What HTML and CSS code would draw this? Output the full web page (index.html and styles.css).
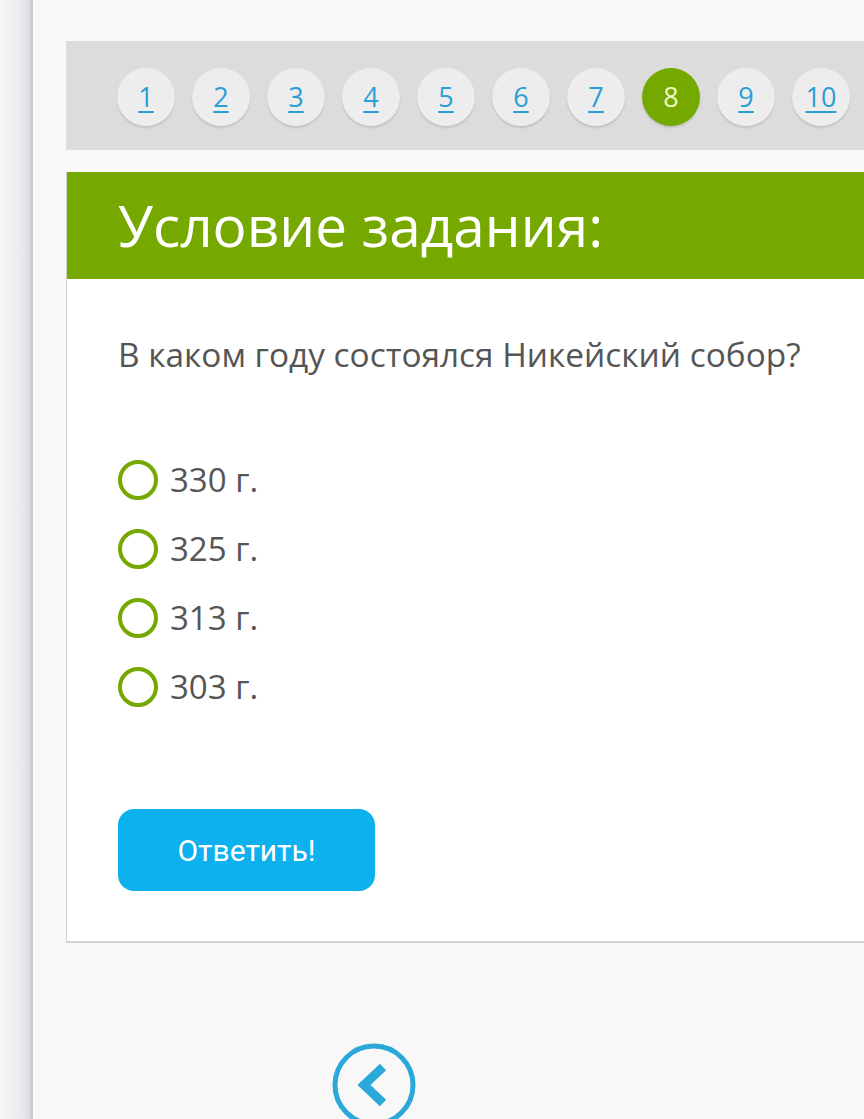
FILE: index.html
```html
<!DOCTYPE html>
<html lang="ru">
<head>
<meta charset="utf-8">
<title>Условие задания</title>
<link rel="stylesheet" href="styles.css">
</head>
<body>
<div class="page">
  <div class="rail"></div>
  <div class="main">
    <nav class="pager">
      <a class="num" href="#">1</a>
      <a class="num" href="#">2</a>
      <a class="num" href="#">3</a>
      <a class="num" href="#">4</a>
      <a class="num" href="#">5</a>
      <a class="num" href="#">6</a>
      <a class="num" href="#">7</a>
      <span class="num active">8</span>
      <a class="num" href="#">9</a>
      <a class="num" href="#">10</a>
    </nav>
    <section class="card">
      <header class="card-head">Условие задания:</header>
      <div class="card-body">
        <p class="question">В каком году состоялся Никейский собор?</p>
        <ul class="options">
          <li class="option"><span class="radio"></span>330 г.</li>
          <li class="option"><span class="radio"></span>325 г.</li>
          <li class="option"><span class="radio"></span>313 г.</li>
          <li class="option"><span class="radio"></span>303 г.</li>
        </ul>
        <button class="submit" type="button">Ответить!</button>
      </div>
    </section>
    <div class="bottom-nav">
      <a class="back" href="#" aria-label="Назад">
        <svg width="84" height="84" viewBox="0 0 84 84">
          <circle cx="42" cy="42" r="39" fill="none" stroke="#2ba8da" stroke-width="5"/>
          <polyline points="51,24 32,42 51,60" fill="none" stroke="#2ba8da" stroke-width="9" stroke-linejoin="miter"/>
        </svg>
      </a>
    </div>
  </div>
</div>
</body>
</html>
```
FILE: styles.css
```css
html, body {
  margin: 0;
  padding: 0;
  background: #f8f8f8;
  overflow: hidden;
}
body {
  font-family: "Open Sans", "Noto Sans", sans-serif;
  width: 864px;
  height: 1119px;
}
.page {
  display: flex;
  height: 1119px;
  overflow: hidden;
}
.rail {
  flex: 0 0 30px;
  background: linear-gradient(to right, #f6f6f8 0%, #ececf0 60%, #dddde2 100%);
  border-right: 3px solid #cdcdd2;
}
.main {
  flex: 1 1 auto;
  padding-left: 33px;
  padding-top: 41px;
  min-width: 0;
  overflow: hidden;
}
.pager {
  height: 109px;
  box-sizing: border-box;
  background: #dcdcdc;
  display: flex;
  align-items: center;
  gap: 17px;
  padding: 2px 0 0 51px;
  overflow: hidden;
}
.num {
  flex: 0 0 58px;
  width: 58px;
  height: 58px;
  border-radius: 50%;
  background: #ededed;
  box-shadow: 0 2px 2px rgba(0, 0, 0, 0.12);
  display: flex;
  align-items: center;
  justify-content: center;
  color: #2a9fd6;
  font-size: 27px;
  text-decoration: underline;
  text-underline-offset: 4px;
  text-decoration-thickness: 2px;
}
.num.active {
  background: #76a900;
  color: #eef9c8;
  text-decoration: none;
  font-size: 27px;
}
.card {
  margin-top: 22px;
  background: #ffffff;
  border-left: 1px solid #d4d4d4;
  border-bottom: 2px solid #d4d4d4;
}
.card-head {
  background: #76a900;
  color: #ffffff;
  height: 107px;
  box-sizing: border-box;
  padding-left: 51px;
  font-size: 56.7px;
  line-height: 107px;
  white-space: nowrap;
}
.card-body {
  padding: 55px 0 50px 51px;
}
.question {
  margin: 0;
  color: #555555;
  font-size: 33.4px;
  line-height: 40px;
  white-space: nowrap;
}
.options {
  list-style: none;
  margin: 71px 0 0;
  padding: 0;
}
.option {
  display: flex;
  align-items: center;
  height: 69px;
  color: #555555;
  font-size: 33px;
}
.radio {
  width: 40px;
  height: 40px;
  box-sizing: border-box;
  border: 4px solid #76a900;
  border-radius: 50%;
  margin-right: 12px;
  flex: 0 0 40px;
}
.submit {
  display: block;
  margin-top: 88px;
  width: 257px;
  height: 82px;
  border: none;
  border-radius: 16px;
  background: #0db1ee;
  color: #ffffff;
  font-family: Roboto, "Liberation Sans", sans-serif;
  font-size: 30px;
  padding: 0;
}
.bottom-nav {
  padding-top: 100px;
  padding-left: 266px;
}
.back {
  display: block;
  width: 84px;
  height: 84px;
}
.back svg {
  display: block;
}
```
